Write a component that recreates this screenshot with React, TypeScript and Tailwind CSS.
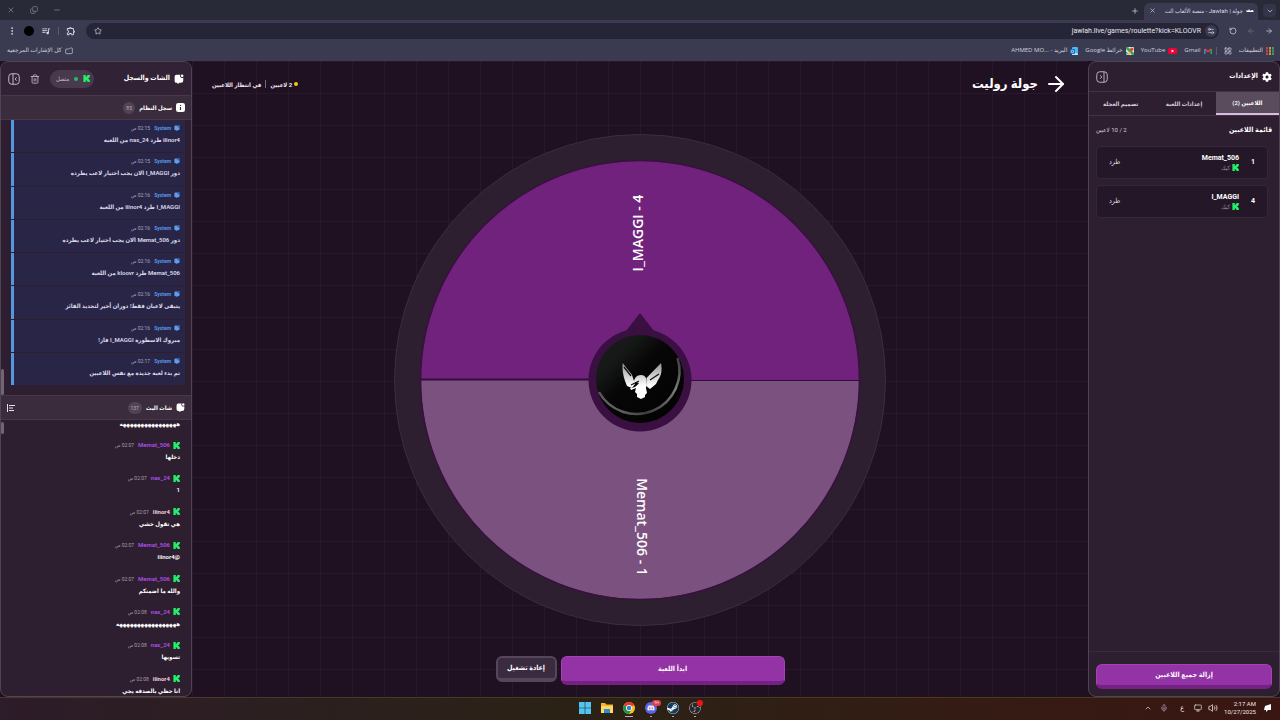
import type { ReactNode } from "react";
import {
  ArrowLeft,
  ArrowRight,
  ChevronDown,
  ChevronUp,
  Copy,
  EllipsisVertical,
  Folder,
  LayoutGrid,
  Mic,
  Minus,
  Monitor,
  Plus,
  RotateCw,
  Settings2,
  Star,
  Trash2,
  Volume2,
  X,
} from "lucide-react";
import { FaCog, FaDiscord, FaSteam } from "react-icons/fa";
import { MdOutlineExtension, MdQueueMusic } from "react-icons/md";
import { SiObsstudio } from "react-icons/si";

interface SystemMessage {
  time: string;
  text: string;
}

interface ChatMessage extends SystemMessage {
  user: string;
  muted?: boolean;
}

const systemMessages: SystemMessage[] = [
  { time: "02:15 ص", text: "iiinor4 طرد nas_24 من اللعبة" },
  { time: "02:15 ص", text: "دور I_MAGGI الان يجب اختيار لاعب يطرده" },
  { time: "02:16 ص", text: "I_MAGGI طرد iiinor4 من اللعبة" },
  { time: "02:16 ص", text: "دور Memat_506 الان يجب اختيار لاعب يطرده" },
  { time: "02:16 ص", text: "Memat_506 طرد kloovr من اللعبة" },
  { time: "02:16 ص", text: "يتبقى لاعبان فقط! دوران أخير لتحديد الفائز" },
  { time: "02:16 ص", text: "مبروك الاسطورة I_MAGGI فاز!" },
  { time: "02:17 ص", text: "تم بدء لعبة جديدة مع نفس اللاعبين" },
];

const chatMessages: ChatMessage[] = [
  { user: "Memat_506", time: "02:07 ص", text: "دخلها" },
  { user: "nas_24", time: "02:07 ص", text: "1" },
  { user: "iiinor4", time: "02:07 ص", text: "هي تقول خشي", muted: true },
  { user: "Memat_506", time: "02:07 ص", text: "@iiinor4" },
  { user: "Memat_506", time: "02:07 ص", text: "والله ما اضمنكم" },
  { user: "nas_24", time: "02:08 ص", text: "هههههههههههههههههه" },
  { user: "nas_24", time: "02:08 ص", text: "تسويها" },
  { user: "iiinor4", time: "02:08 ص", text: "انا حظي بالصدفه يجي", muted: true },
];

const players = [
  { number: 1, name: "Memat_506" },
  { number: 4, name: "I_MAGGI" },
];

function KickIcon() {
  return (
    <svg viewBox="0 0 7 7" className="size-[7px] shrink-0" fill="#22f06a">
      <path d="M.4 0h2.400v1.900h.7V1h.8V0h2.500v2.300H6v.8h-.7v.8H6v.8h.8V7H4.300V6h-.8v-.9h-.7V7H.4z" />
    </svg>
  );
}

function ChatIcon({ className }: { className: string }) {
  return (
    <svg viewBox="0 0 16 16" className={className} fill="currentColor">
      <path d="M4 1h6.2a3.2 3.2 0 0 0 4.6 4.4V10a4 4 0 0 1-4 4H9l-3 2-.6-2H4a3 3 0 0 1-3-3V4a3 3 0 0 1 3-3z" />
      <circle cx="13" cy="2.7" r="2.1" />
    </svg>
  );
}

function InfoIcon() {
  return (
    <svg viewBox="0 0 16 16" className="size-[9px] shrink-0">
      <rect width="16" height="16" rx="4" fill="#fff" />
      <path d="M8 3.5v2M8 7v5.5" stroke="#3a2b3d" strokeWidth="2" />
    </svg>
  );
}

function PanelIcon({ flipped }: { flipped?: boolean }) {
  return (
    <svg viewBox="0 0 24 24" className="size-3" fill="none" stroke="currentColor" strokeWidth="2">
      <rect x="1.500" y="1.500" width="21" height="21" rx="6" />
      {flipped ? <path d="M16 1.500v21M8.500 8.500l3 3.500-3 3.500" /> : <path d="M10 1.500v21M17 8.500L14.500 12l2.500 3.500" />}
    </svg>
  );
}

function WindowControls() {
  return (
    <div className="flex items-center gap-[15px] text-[#8b8a9c]">
      <button aria-label="تصغير"><Minus className="size-2" /></button>
      <button aria-label="استعادة"><Copy className="size-2 -scale-y-100" /></button>
      <button aria-label="إغلاق"><X className="size-2" /></button>
    </div>
  );
}

function Bookmark({ icon, children }: { icon: ReactNode; children?: ReactNode }) {
  return (
    <a href="#" className="flex items-center gap-[3px] whitespace-nowrap">
      {icon}
      <span>{children}</span>
    </a>
  );
}

function Browser() {
  return (
    <header className="shrink-0 text-[#dddce8]">
      <div className="flex h-5 items-end justify-between bg-[#292a38] pr-1 pl-[7px]">
        <div className="flex items-end gap-[5px]">
          <button aria-label="بحث" className="mb-[3px] grid size-[13px] place-items-center rounded bg-[#34354a]">
            <ChevronDown className="size-2" />
          </button>
          <div className="flex h-[17px] w-[114px] items-center justify-between rounded-t-md bg-[#3a3b50] pr-1 pb-0.5 pl-[5px]">
            <div className="flex items-center gap-[3px]">
              <svg viewBox="0 0 8 4" className="h-1 w-2 shrink-0" fill="#fff">
                <path d="M0 2l1-1 1 1 1-2 1 2 2-1 2 1-1 1H1z" />
              </svg>
              <span className="text-[6px] whitespace-nowrap">جولة | Jawlah - منصة الألعاب الت</span>
            </div>
            <button aria-label="إغلاق التبويب"><X className="size-[7px]" /></button>
          </div>
          <button aria-label="تبويب جديد" className="mb-[5px]"><Plus className="size-2" /></button>
        </div>
        <div className="flex h-5 items-center"><WindowControls /></div>
      </div>
      <div className="flex h-[22px] items-center gap-2.5 bg-[#3a3b50] pr-[7px] pl-[7px]">
        <div className="flex items-center gap-2.5">
          <button aria-label="رجوع"><ArrowRight className="size-2" /></button>
          <button aria-label="تقدم" className="text-[#77778a]"><ArrowLeft className="size-2" /></button>
          <button aria-label="تحديث"><RotateCw className="size-2 -scale-x-100" /></button>
        </div>
        <div className="flex h-4 flex-1 items-center gap-1 rounded-full bg-[#262537] pr-[2px] pl-2">
          <span className="grid size-3 place-items-center rounded-full bg-[#3a3b50]"><Settings2 className="size-2" /></span>
          <input
            aria-label="العنوان"
            dir="ltr"
            defaultValue="jawlah.live/games/roulette?kick=KLOOVR"
            className="min-w-0 flex-1 bg-transparent text-right text-[7px] text-[#e8e7f0] outline-none"
          />
          <button aria-label="إشارة مرجعية"><Star className="size-2" /></button>
        </div>
        <div className="flex items-center gap-[7px]">
          <button aria-label="الإضافات"><MdOutlineExtension className="size-2.5" /></button>
          <span className="h-2 w-px bg-[#5b5a70]" />
          <button aria-label="الوسائط"><MdQueueMusic className="size-2.5" /></button>
          <span className="size-2.5 rounded-full bg-black" />
          <button aria-label="القائمة"><EllipsisVertical className="size-2.5" /></button>
        </div>
      </div>
      <nav className="flex h-[19px] items-center justify-between bg-[#3a3b50] pr-1.5 pb-0.5 pl-[7px] font-['Open_Sans','DejaVu_Sans',sans-serif] text-[6px] text-[#d3d2df]">
        <div className="flex items-center gap-[7px]">
          <Bookmark
            icon={
              <svg viewBox="0 0 8 8" className="size-2">
                <path d="M1 0v8" stroke="#e34b43" strokeWidth="1.600" />
                <path d="M4 0v8" stroke="#e8b53b" strokeWidth="1.600" />
                <path d="M7 0v8" stroke="#4bae62" strokeWidth="1.600" />
                <path d="M0 2.700h8M0 5.300h8" stroke="#3a3b50" strokeWidth=".6" />
              </svg>
            }
          >
            التطبيقات
          </Bookmark>
          <button aria-label="مجموعات"><LayoutGrid className="size-2" /></button>
          <div className="flex items-center gap-1">
            <span className="h-2 w-px bg-[#5b5a70]" />
            <Bookmark
              icon={
                <svg viewBox="0 0 8 6" className="h-1.5 w-2" fill="none" strokeWidth="1.500">
                  <path d="M.8 6V1" stroke="#4285f4" />
                  <path d="M7.200 6V1" stroke="#34a853" />
                  <path d="M.8 1L4 3.600 7.200 1" stroke="#ea4335" />
                </svg>
              }
            >
              Gmail
            </Bookmark>
          </div>
          <Bookmark
            icon={
              <svg viewBox="0 0 9 6" className="h-1.5 w-[9px]">
                <rect width="9" height="6" rx="1.500" fill="#f00033" />
                <path d="M3.600 1.600v2.800L6 3z" fill="#fff" />
              </svg>
            }
          >
            YouTube
          </Bookmark>
          <Bookmark
            icon={
              <svg viewBox="0 0 8 8" className="size-2">
                <rect width="8" height="8" rx="1" fill="#e8e8e8" />
                <path d="M0 0h2l6 6v2H6L0 2z" fill="#34a853" />
                <path d="M0 8l3.500-3.500L5 6 3 8z" fill="#f4bf3a" />
                <path d="M0 8V4.500l2 1.500z" fill="#4285f4" />
                <circle cx="5.800" cy="2.300" r="1.700" fill="#ea4335" />
              </svg>
            }
          >
            خرائط Google
          </Bookmark>
          <Bookmark
            icon={
              <svg viewBox="0 0 8 8" className="size-2">
                <rect x="2" width="6" height="8" rx="1" fill="#50b4f0" />
                <path d="M2 4l6 3v1H2z" fill="#b8e4ff" />
                <rect y="2" width="5" height="5" rx="1" fill="#0f6cbd" />
                <circle cx="2.500" cy="4.500" r="1.200" fill="none" stroke="#fff" strokeWidth=".7" />
              </svg>
            }
          >
            البريد - AHMED MO...&lrm;
          </Bookmark>
        </div>
        <Bookmark icon={<Folder className="size-2 -scale-x-100" />}>كل الإشارات المرجعية</Bookmark>
      </nav>
    </header>
  );
}

function SettingsPanel() {
  return (
    <aside className="flex w-[15%] shrink-0 flex-col rounded-lg border border-[#514356] bg-[#2d1f30]">
      <div className="flex h-[29px] items-center justify-between px-[7px]">
        <h2 className="flex items-center gap-1 text-[7px] font-bold text-white">
          <FaCog className="size-2.5" />
          الإعدادات
        </h2>
        <button aria-label="طي الإعدادات" className="text-[#b9afbc]"><PanelIcon flipped /></button>
      </div>
      <div role="tablist" className="flex h-[25px] border-y border-[#413245] text-[6px] font-semibold text-[#d5cdd7]">
        <button role="tab" aria-selected="true" className="flex-1 border-b-2 border-[#d9bde0] bg-[#5a4b5d] text-white">اللاعبين (2)</button>
        <button role="tab" aria-selected="false" className="flex-1">إعدادات اللعبة</button>
        <button role="tab" aria-selected="false" className="flex-1">تصميم العجلة</button>
      </div>
      <div className="flex flex-1 flex-col gap-2.5 px-[7px] pt-2">
        <div className="flex items-center justify-between">
          <h3 className="text-[7px] leading-3 font-bold text-white">قائمة اللاعبين</h3>
          <span className="text-[6px] leading-3 text-[#d5cdd7]">2 / 10 لاعبين</span>
        </div>
        <ul className="flex flex-col gap-1.5 pr-1">
          {players.map((player) => (
            <li key={player.name} className="flex h-[33px] items-center rounded border border-[#34273a] bg-[#241727] pr-2.5 pl-3">
              <span className="w-2 text-center text-[7px] font-bold text-white">{player.number}</span>
              <div className="mr-2.5 flex flex-1 flex-col gap-0.5">
                <span className="text-[7px] leading-2 font-bold text-white">{player.name}</span>
                <span className="flex items-center gap-0.5 text-[6px] leading-2 text-[#9a8f9d]">
                  <KickIcon />
                  كيك
                </span>
              </div>
              <button className="text-[7px] text-[#e5dfe6]">طرد</button>
            </li>
          ))}
        </ul>
      </div>
      <div className="border-t border-[#392b3d] px-[7px] pt-2 pb-[7px]">
        <button className="h-[25px] w-full rounded-md border border-b-4 border-[#a344b5] border-b-[#742085] bg-[#9433a6] text-[7px] font-bold text-white">
          إزالة جميع اللاعبين
        </button>
      </div>
    </aside>
  );
}

function SectionHeader({ icon, title, count, children }: { icon: ReactNode; title: string; count: number; children?: ReactNode }) {
  return (
    <div className="flex h-[25px] shrink-0 items-center border-y border-[#463749] bg-[#3a2b3d] pr-1.5 pl-1.5">
      <h3 className="flex items-center gap-1 text-[6px] font-bold text-white">
        {icon}
        {title}
      </h3>
      <span className="mr-1 min-w-3 flex-none rounded-full bg-[#514354] px-[3px] text-center text-[5px] leading-3 text-[#b5abb8]">{count}</span>
      <div className="mr-auto flex">{children}</div>
    </div>
  );
}

function ChatPanel() {
  return (
    <aside className="flex min-h-0 w-[15%] shrink-0 flex-col overflow-hidden rounded-lg border border-[#514356] bg-[#2d1f30]">
      <div className="flex h-[33px] shrink-0 items-center justify-between bg-[#33243a]/60 pr-[7px] pl-[7px]">
        <h2 className="flex items-center gap-1 text-[7px] font-bold text-white">
          <ChatIcon className="size-[10px]" />
          الشات والسجل
        </h2>
        <div className="flex items-center gap-2.5 text-[#c4bbc7]">
          <span className="flex h-[18px] items-center gap-[5px] rounded-full bg-[#483a4c] pr-1 pl-1.5 text-[6px]">
            <KickIcon />
            <span className="size-1 rounded-full bg-[#2bbb68]" />
            متصل
          </span>
          <button aria-label="مسح السجل"><Trash2 className="size-[10px]" /></button>
          <button aria-label="طي الشات"><PanelIcon /></button>
        </div>
      </div>
      <SectionHeader icon={<InfoIcon />} title="سجل النظام" count={85} />
      <div className="relative shrink-0 pr-1.5 pb-2.5 pl-2.5">
        <ul className="flex h-[265px] flex-col gap-px">
          {systemMessages.map((message, index) => (
            <li key={index} className="flex flex-1 flex-col justify-center border-l-[3px] border-[#5497e0] bg-[#292547] pr-[5px] pb-1">
              <div className="flex items-center gap-[3px] text-[5px] leading-3">
                <ChatIcon className="size-1.5 text-[#5c9ff0]" />
                <span className="font-semibold text-[#5aa0f2]">System</span>
                <span className="mr-px text-[#aaa5bd]">{message.time}</span>
              </div>
              <p className="text-[6px] leading-3 font-semibold whitespace-nowrap text-[#dedceb]">{message.text}</p>
            </li>
          ))}
        </ul>
        <span className="absolute bottom-0 left-0 h-[26px] w-[3px] rounded-full bg-[#716575]" />
      </div>
      <SectionHeader icon={<ChatIcon className="size-[9px]" />} title="شات البث" count={137}>
        <svg viewBox="0 0 8 8" className="size-2" fill="none" stroke="#e5dfe6">
          <path d="M.5 0v8M2 1.500h6M2 4h4M2 6.500h5" />
        </svg>
      </SectionHeader>
      <div className="relative min-h-0 flex-1 overflow-hidden pr-[11px] text-white">
        <p className="h-[19px] text-[6px] leading-2 font-semibold">ههههههههههههههههه</p>
        <ul className="flex h-[267px] flex-col">
          {chatMessages.map((message, index) => (
            <li key={index} className="flex-1">
              <div className="flex items-center gap-[3px] text-[5px] leading-3">
                <KickIcon />
                <span className={message.muted ? "text-[6px] font-bold text-[#f3d0dc]" : "text-[6px] font-semibold text-[#ad50e6]"}>{message.user}</span>
                <span className="mr-px text-[#a79dab]">{message.time}</span>
              </div>
              <p className="text-[6px] leading-3 font-semibold">{message.text}</p>
            </li>
          ))}
        </ul>
        <span className="absolute top-0.5 left-0 h-3 w-[3px] rounded-full bg-[#716575]" />
      </div>
    </aside>
  );
}

function Wheel() {
  return (
    <svg viewBox="0 0 492 492" className="aspect-square max-h-full w-[492px] max-w-full" role="img" aria-label="عجلة الروليت">
      <defs>
        <linearGradient id="shine" x1="0" y1="0" x2="1" y2="1">
          <stop offset="0" stopColor="#1b1c1d" />
          <stop offset=".25" stopColor="#161717" />
          <stop offset=".45" stopColor="#060606" />
          <stop offset="1" stopColor="#020202" />
        </linearGradient>
        <linearGradient id="bird" gradientUnits="userSpaceOnUse" x1="246" y1="228" x2="246" y2="262">
          <stop offset="0" stopColor="#8d8d8d" />
          <stop offset=".7" stopColor="#fff" />
        </linearGradient>
        <linearGradient id="rim" x1="0" y1="1" x2="1" y2="0">
          <stop offset="0" stopColor="#858585" />
          <stop offset=".3" stopColor="#3d3d3d" />
          <stop offset=".7" stopColor="#7d7d7d" />
          <stop offset="1" stopColor="#3a3a3a" />
        </linearGradient>
      </defs>
      <circle cx="246" cy="246" r="245.500" fill="#2d1f30" stroke="#3b2d3f" />
      <path d="M27 246a219 219 0 0 1 438 0z" fill="#70227d" />
      <path d="M27 246a219 219 0 0 0 438 0z" fill="#7b5180" />
      <circle cx="246" cy="246" r="219.500" fill="none" stroke="#3a1040" strokeWidth="1.500" />
      <path d="M27 245.500h219" stroke="#350d3c" strokeWidth="2" />
      <path d="M246 246.500h219" stroke="#350d3c" />
      <g fill="#fff" fontFamily="'Open Sans', sans-serif" fontSize="14" fontWeight="600" direction="ltr" textAnchor="middle">
        <text transform="translate(249 99) rotate(-90)">I_MAGGI - 4</text>
        <text transform="translate(243 393) rotate(90)">Memat_506 - 1</text>
      </g>
      <path d="M246 179l14 18h-28z" fill="#3a0f42" />
      <circle cx="246" cy="246" r="51.500" fill="#3a0f42" />
      <circle cx="246" cy="245" r="44" fill="url(#shine)" />
      <path d="M283.500 224A43 43 0 0 1 205 258" fill="none" stroke="url(#rim)" strokeWidth="2.500" />
      <g fill="url(#bird)">
        <path d="M228.700 229l2.300 3 7 9 3 9-3 4-5-2-2-5c-2-6-3-12-2.300-18z" />
        <path d="M267 229c1.500 8 0 13-3 17l-2 4-6 5-4-3 .5-8z" />
        <path d="M236 254c4 0 7-2 9-5-2-1-4-1-5 1-.500-6 3-9 7-9 4 0 6 3 5 7v6l1 5-2 2v2l-4 2-4-2v-3l-2-2 1-4-5 2z" />
      </g>
      <path d="M230 233l7 9M256 246l9-6M237 251l8-4" stroke="#111" strokeWidth="1.300" />
    </svg>
  );
}

function Game() {
  return (
    <main className="flex min-w-0 flex-1 flex-col bg-[#1f1022] bg-[linear-gradient(to_right,#281829_1px,transparent_1px),linear-gradient(to_bottom,#281829_1px,transparent_1px)] bg-[size:32px_32px]">
      <div className="flex h-[46px] shrink-0 items-center justify-between px-5">
        <h1 className="flex items-center gap-1.5 text-[13px] font-bold text-white">
          <a href="#" aria-label="رجوع"><ArrowRight className="size-6" strokeWidth={2} /></a>
          جولة روليت
        </h1>
        <p className="flex items-center gap-1 text-[6px] font-bold text-[#eee5ef]">
          <span className="flex items-center gap-0.5"><span className="size-1 rounded-full bg-[#f3c61c]" />2 لاعبين</span>
          <span className="h-2 w-px bg-[#75687a]" />
          في انتظار اللاعبين
        </p>
      </div>
      <div className="flex min-h-0 flex-1 items-center justify-center">
        <Wheel />
      </div>
      <div className="flex h-[44px] shrink-0 items-start justify-center gap-1 pt-[3px]">
        <button className="h-[29px] w-1/4 rounded-md border border-b-4 border-[#a344b5] border-b-[#742085] bg-[#9433a6] text-[7px] font-bold text-white">ابدأ اللعبة</button>
        <button className="h-[26px] w-[61px] rounded-md border-2 border-b-4 border-[#55475a] bg-[#3b2b40] text-[7px] font-bold text-white">إعادة تشغيل</button>
      </div>
    </main>
  );
}

function ChromeIcon() {
  return (
    <svg viewBox="0 0 24 24" className="size-3">
      <circle cx="12" cy="12" r="12" fill="#fbc116" />
      <path d="M12 12L1.600 6a12 12 0 0 1 20.800 0z" fill="#e33b2e" />
      <path d="M12 12L1.600 6A12 12 0 0 0 12 24l5-9z" fill="#229342" />
      <circle cx="12" cy="12" r="6" fill="#fff" />
      <circle cx="12" cy="12" r="4.500" fill="#2a7de1" />
    </svg>
  );
}

function Taskbar() {
  return (
    <footer className="grid h-[23px] shrink-0 grid-cols-3 items-center border-t border-[#493923] bg-linear-to-l from-[#3a1512] via-[#2b2215] via-55% to-[#2d1c29] px-1.5 text-[#eee7e5]">
      <div className="flex items-center gap-1.5 pb-0.5">
        <span className="grid size-3 place-items-center">
          <svg viewBox="0 0 8 8" className="size-2" fill="#fff">
            <path d="M1 2l6-2v6L4 6 2 8V6H0z" />
          </svg>
        </span>
        <time dir="ltr" className="text-right text-[6px] leading-2">
          2:17 AM
          <br />
          10/27/2025
        </time>
        <Volume2 className="size-2.5" />
        <Monitor className="size-2" />
        <span className="mx-1 text-[7px]">ع</span>
        <Mic className="mx-0.5 size-2 text-[#c693c8]" />
        <ChevronUp className="size-2" />
      </div>
      <div dir="ltr" className="flex items-center justify-center gap-2.5 pb-0.5">
        <button aria-label="ابدأ">
          <svg viewBox="0 0 12 12" className="size-3" fill="#4fc4f5">
            <path d="M0 0h5.700v5.700H0zM6.300 0H12v5.700H6.300zM0 6.300h5.700V12H0zM6.300 6.300H12V12H6.300z" />
          </svg>
        </button>
        <button aria-label="الملفات">
          <svg viewBox="0 0 12 12" className="size-3">
            <path d="M0 1h4l1.500 1.500H12V11H0z" fill="#eeb52e" />
            <path d="M0 4h12v7H0z" fill="#ffd75c" />
            <path d="M3 7h6v4H3z" fill="#2d8bd0" />
          </svg>
        </button>
        <button aria-label="Chrome" className="relative">
          <ChromeIcon />
          <span className="absolute top-3.5 left-0.5 h-px w-2 bg-[#d0a2d6]" />
        </button>
        <button aria-label="Discord" className="relative">
          <span className="grid size-3 place-items-center rounded-full bg-[#5865e8]"><FaDiscord className="size-2" /></span>
          <span className="absolute -top-0.5 -right-1 rounded-full bg-[#dd4150] px-0.5 text-[4px] leading-[6px]">9+</span>
          <span className="absolute top-3.5 left-[5px] h-px w-0.5 bg-[#b5a4a5]" />
        </button>
        <button aria-label="Steam" className="relative">
          <FaSteam className="size-3 rounded-full bg-white text-[#123b60]" />
          <span className="absolute top-3.5 left-[5px] h-px w-0.5 bg-[#b5a4a5]" />
        </button>
        <button aria-label="OBS" className="relative">
          <SiObsstudio className="size-3 rounded-full bg-[#29252a] text-[#d6d0d2]" />
          <span className="absolute -top-0.5 -right-0.5 size-1.5 rounded-full bg-[#f01414]" />
          <span className="absolute top-3.5 left-[5px] h-px w-0.5 bg-[#b5a4a5]" />
        </button>
      </div>
    </footer>
  );
}

export default function App() {
  return (
    <div dir="rtl" className="flex h-screen flex-col overflow-hidden bg-[#1f1022] font-['Roboto','DejaVu_Sans_Condensed','DejaVu_Sans',sans-serif]">
      <Browser />
      <div className="flex min-h-0 flex-1">
        <SettingsPanel />
        <Game />
        <ChatPanel />
      </div>
      <Taskbar />
    </div>
  );
}
